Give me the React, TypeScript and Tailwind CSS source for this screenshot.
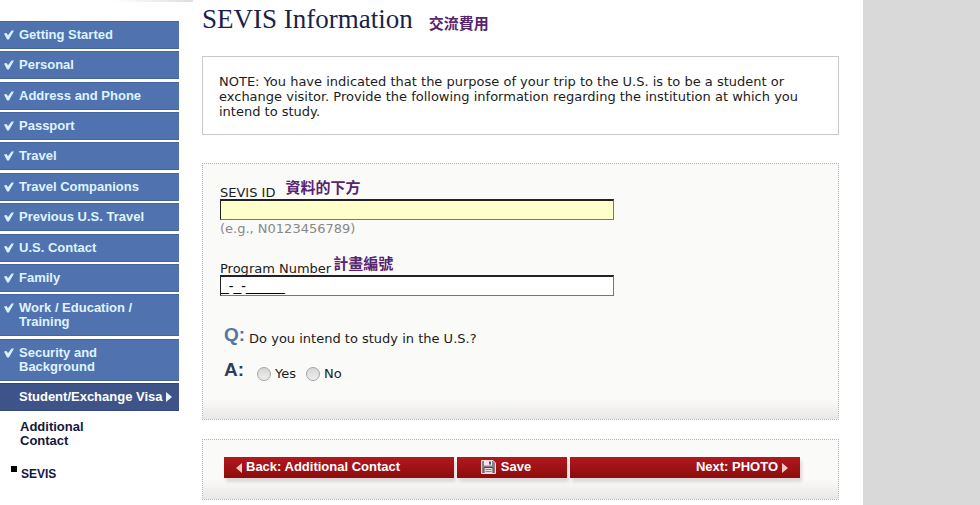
import { useState } from "react";

const sections = [
  "Getting Started",
  "Personal",
  "Address and Phone",
  "Passport",
  "Travel",
  "Travel Companions",
  "Previous U.S. Travel",
  "U.S. Contact",
  "Family",
  "Work / Education / Training",
  "Security and Background",
];

function CheckMark() {
  return (
    <svg viewBox="0 0 10 10" className="mt-[2px] h-[10px] w-[10px] shrink-0" aria-hidden="true">
      <path d="M0 3.4 L2.6 3 L4 5.2 L7.6 0.6 L10 0.6 L4.9 9.4 L3.1 9.4 Z" fill="#d9effc" />
    </svg>
  );
}

function FloppyIcon() {
  return (
    <svg viewBox="0 0 15 14" className="h-[14px] w-[15px] shrink-0" aria-hidden="true">
      <path d="M0.5 0.5 H12 L14.5 3 V13.5 H0.5 Z" fill="#8b8088" stroke="#f0dcdd" />
      <rect x="3" y="1" width="8" height="4.5" fill="#f3e9ea" />
      <rect x="8" y="1.5" width="2" height="3" fill="#5d5560" />
      <path d="M3 13 V7.5 H12 V13" fill="#e4dadd" stroke="#4e4751" />
      <path d="M4.5 9.5 H10.5 M4.5 11.5 H10.5" stroke="#8d8289" />
    </svg>
  );
}

function Note({ children }: { children: string }) {
  return (
    <span className="font-['Noto_Sans_CJK_TC',sans-serif] text-[15px] leading-[15px] font-bold text-[#57246f]">
      {children}
    </span>
  );
}

function Sidebar() {
  return (
    <aside className="w-[179px] shrink-0 font-['Liberation_Sans',sans-serif] text-[13px] leading-[14px] font-bold">
      <div className="mr-[-14px] ml-auto h-[2px] w-[80px] bg-linear-to-r from-white to-[#dedede]" />
      <nav className="mt-[19px]">
        <ul className="flex min-h-[390px] flex-col justify-between">
          {sections.map((s) => (
            <li key={s}>
              <a
                href="#"
                className="flex gap-[5px] border-y border-[#46659c] bg-[#5073b0] py-[6px] pr-[30px] pl-[4px] text-[#dff3fd]"
              >
                <CheckMark />
                <span>{s}</span>
              </a>
            </li>
          ))}
          <li>
            <a
              href="#"
              className="flex items-center gap-[3px] border-y border-[#34487a] bg-[#3e5489] py-[6px] pl-[19px] whitespace-nowrap text-white"
            >
              Student/Exchange Visa
              <svg viewBox="0 0 6 10" className="h-[10px] w-[6px]" aria-hidden="true">
                <path d="M0 0 L6 5 L0 10 Z" fill="#e8f3fb" />
              </svg>
            </a>
          </li>
        </ul>
        <ul className="pt-[9px] text-[#14173f]">
          <li className="w-[90px] pl-[20px]">
            <a href="#">Additional Contact</a>
          </li>
          <li className="mt-[18px] flex gap-[4px] pl-[11px]">
            <span className="h-[6px] w-[6px] bg-black" />
            <a href="#" className="pt-[1px] text-[12px]">
              SEVIS
            </a>
          </li>
        </ul>
      </nav>
    </aside>
  );
}

const fieldClass =
  "block h-[21px] w-full max-w-[394px] border border-t-2 border-t-[#222] border-r-[#777] border-b-[#777] border-l-[#222] px-0 font-['Liberation_Sans',sans-serif] text-[14px] leading-[16px] text-black outline-none";

const panelClass =
  "border border-dotted border-[#b4b4a8] bg-[#fafaf9] bg-linear-to-t from-[#e9e8e7] to-transparent bg-[length:100%_20px] bg-bottom bg-no-repeat";

const buttonClass =
  "flex h-[21px] items-center bg-linear-to-b from-[#b2181f] to-[#8c0c0c] pb-[2px] shadow-[2px_4px_3px_#ded8d8]";

export default function App() {
  const [sevisId, setSevisId] = useState("");
  const [program, setProgram] = useState("_-_-_____");

  return (
    <div className="flex min-h-screen bg-white">
      <Sidebar />
      <main className="min-w-0 flex-1 pt-[3px] pr-[24px] pl-[23px] font-['DejaVu_Sans',sans-serif] text-[13px] leading-[15px] text-[#1c1c1c]">
        <header className="flex h-[33px] items-start gap-[16px]">
          <h1 className="font-['Liberation_Serif',serif] text-[27px] leading-[32px] text-[#1c1f4a]">
            SEVIS Information
          </h1>
          <span className="pt-[12px]">
            <Note>交流費用</Note>
          </span>
        </header>

        <p className="mt-[20px] border border-[#c9c9c9] px-[16px] pt-[17px] pb-[15px]">
          <span className="block max-w-[584px]">
            NOTE: You have indicated that the purpose of your trip to the U.S. is to be a student or
            exchange visitor. Provide the following information regarding the institution at which you
            intend to study.
          </span>
        </p>

        <form onSubmit={(e) => e.preventDefault()}>
          <div className={`mt-[28px] px-[17px] pt-[15px] pb-[38px] ${panelClass}`}>
            <div className="flex h-[20px] gap-[10px]">
              <label htmlFor="sevis" className="pt-[6px]">
                SEVIS ID
              </label>
              <Note>資料的下方</Note>
            </div>
            <input
              id="sevis"
              value={sevisId}
              onChange={(e) => setSevisId(e.target.value)}
              className={`bg-[#ffffcc] ${fieldClass}`}
            />
            <p className="pt-[1px] text-[#888]">(e.g., N0123456789)</p>

            <div className="mt-[19px] flex h-[20px] gap-[2px]">
              <label htmlFor="program" className="pt-[6px]">
                Program Number
              </label>
              <Note>計畫編號</Note>
            </div>
            <input
              id="program"
              value={program}
              onChange={(e) => setProgram(e.target.value)}
              className={`bg-white ${fieldClass}`}
            />

            <fieldset className="mt-[28px] pl-[4px]">
              <legend className="flex items-end gap-[4px]">
                <span className="font-['Liberation_Sans',sans-serif] text-[19px] leading-[22px] font-bold text-[#51779f]">
                  Q:
                </span>
                Do you intend to study in the U.S.?
              </legend>
              <div className="mt-[13px] flex items-end">
                <span className="self-start font-['Liberation_Sans',sans-serif] text-[19px] leading-[22px] font-bold text-[#2b4159]">
                  A:
                </span>
                {["Yes", "No"].map((v) => (
                  <label key={v} className="mr-[-3px] ml-[13px] flex items-center gap-[4px] pt-[7px]">
                    <input
                      type="radio"
                      name="study"
                      value={v}
                      className="h-[14px] w-[14px] appearance-none rounded-full border border-[#a5a5a5] bg-linear-to-b from-[#d6d6d6] to-[#eeeeee] checked:bg-[#444]"
                    />
                    {v}
                  </label>
                ))}
              </div>
            </fieldset>
          </div>

          <div
            className={`mt-[19px] grid grid-cols-[23fr_11fr_23fr] gap-[3px] pt-[17px] pr-[38px] pb-[21px] pl-[21px] font-['Liberation_Sans',sans-serif] font-bold text-white ${panelClass}`}
          >
            <button type="button" className={`gap-[4px] pl-[12px] ${buttonClass}`}>
              <svg viewBox="0 0 6 10" className="mt-[3px] h-[10px] w-[6px]" aria-hidden="true">
                <path d="M6 0 L0 5 L6 10 Z" fill="#f6c9c4" />
              </svg>
              Back: Additional Contact
            </button>
            <button type="submit" className={`justify-center gap-[5px] pr-[12px] ${buttonClass}`}>
              <FloppyIcon />
              Save
            </button>
            <button type="button" className={`justify-end gap-[4px] pr-[12px] ${buttonClass}`}>
              Next: PHOTO
              <svg viewBox="0 0 6 10" className="mt-[3px] h-[10px] w-[6px]" aria-hidden="true">
                <path d="M0 0 L6 5 L0 10 Z" fill="#f6c9c4" />
              </svg>
            </button>
          </div>
        </form>
      </main>
      <div className="w-[117px] shrink-0 bg-[#d9d9d9]" />
    </div>
  );
}
